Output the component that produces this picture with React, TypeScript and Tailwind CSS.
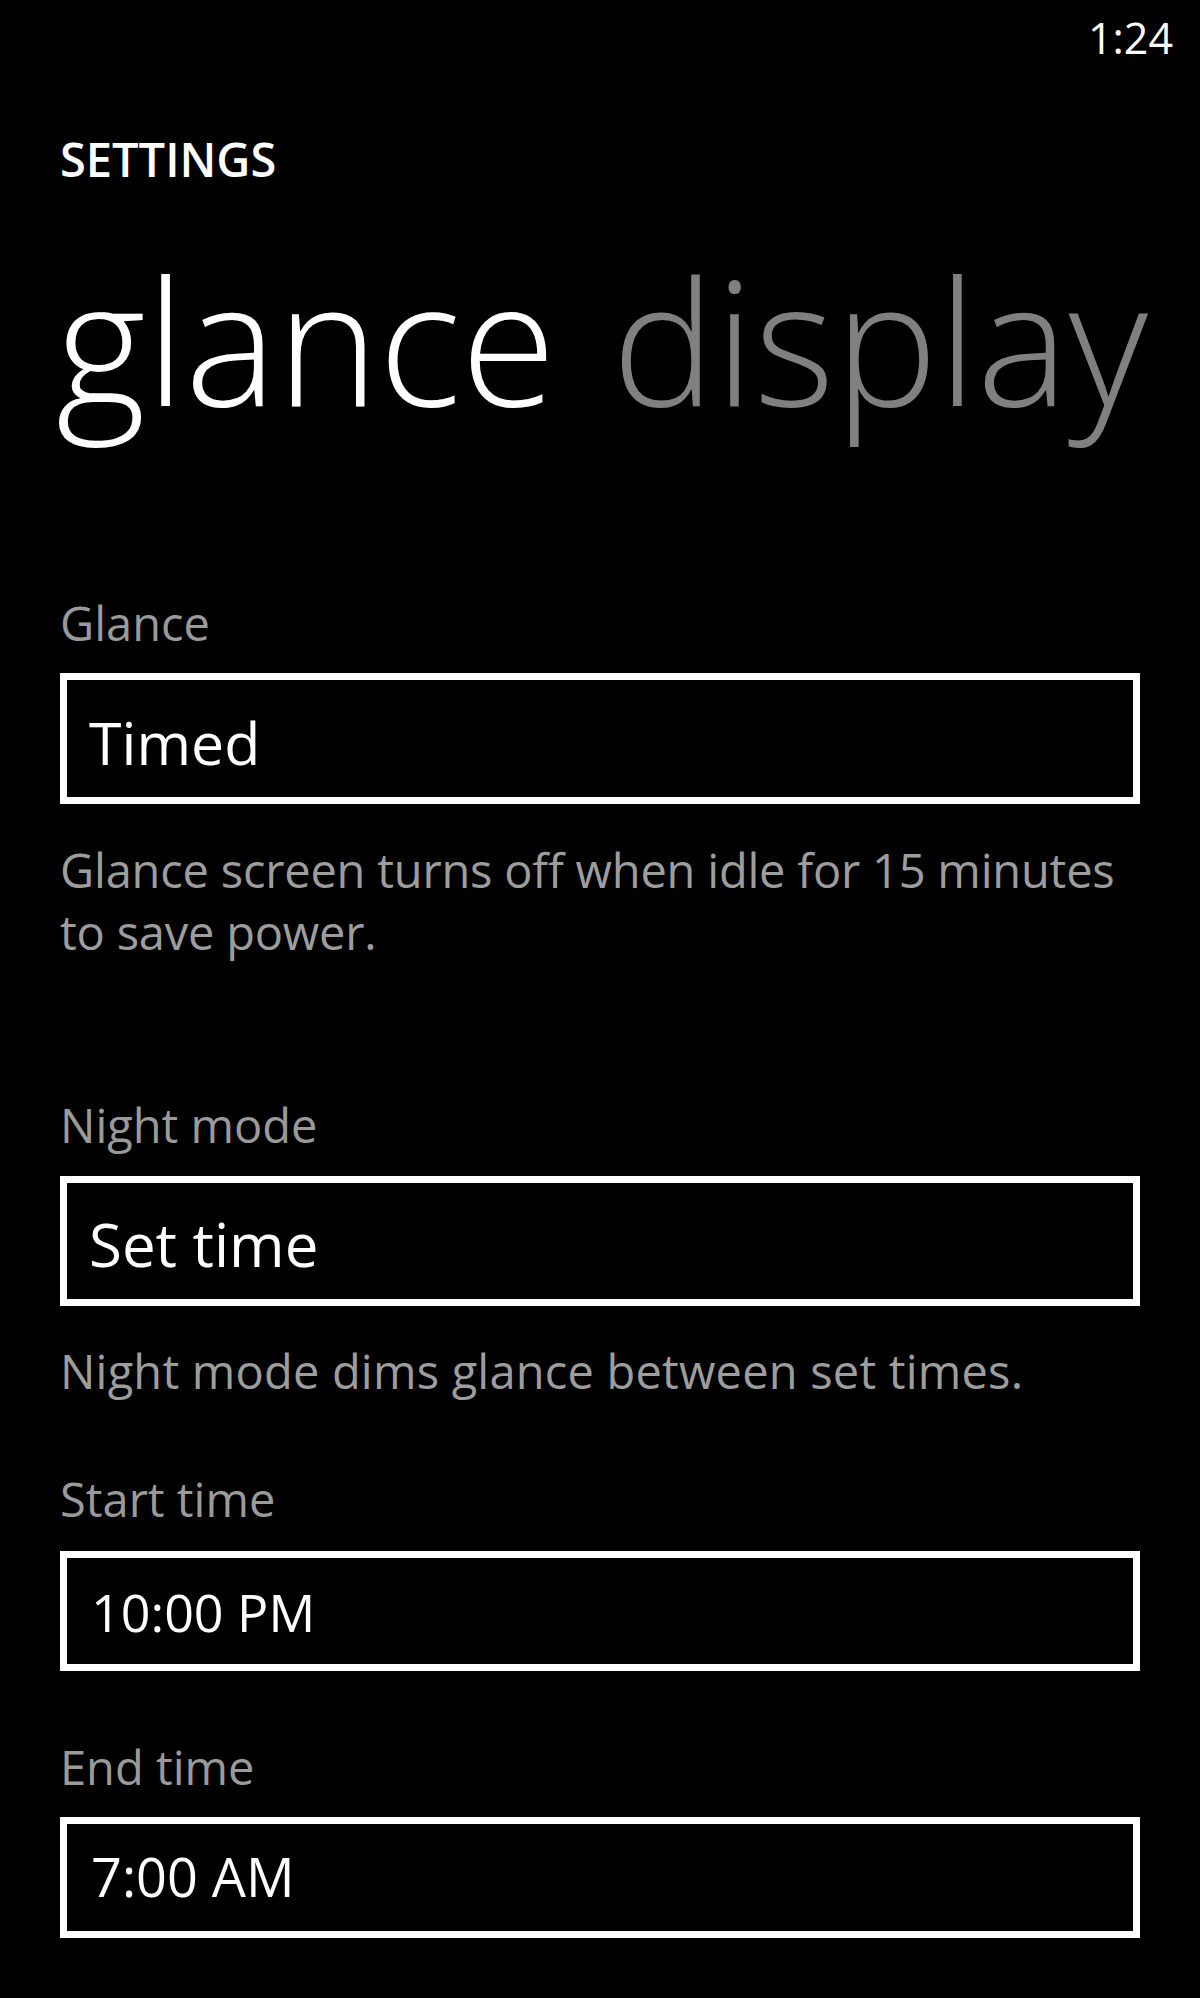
import React from "react";

const font = { fontFamily: '"Open Sans", "Noto Sans", "DejaVu Sans", sans-serif' };

function Label({ text, mt }: { text: string; mt: string }) {
  return (
    <div className={`${mt} text-[47px] leading-[56px] text-[#9a9a9a] whitespace-nowrap`}>{text}</div>
  );
}

export default function App() {
  return (
    <div className="w-[1200px] h-[1998px] bg-black text-white overflow-hidden" style={font}>
      <div className="pt-[8px] pr-[27px] text-right text-[43px] leading-[60px]">1:24</div>
      <div className="mt-[66px] pl-[60px] text-[47px] leading-[50px] font-semibold">SETTINGS</div>
      <div className="mt-[55px] pl-[56px] text-[173px] leading-[200px] font-light whitespace-nowrap">
        <span className="text-white">glance</span>
        <span className="ml-[56px] text-[#808080]">display</span>
      </div>
      <div className="px-[60px]">
        <Label text="Glance" mt="mt-[156px]" />
        <div className="mt-[22px] h-[131px] border-[7px] border-white pl-[22px] pt-[32px]">
          <div className="text-[59px] leading-[60px]">Timed</div>
        </div>
        <div className="mt-[35px] text-[47px] leading-[62px] text-[#9d9d9d] whitespace-nowrap tracking-[-0.2px]">
          Glance screen turns off when idle for 15 minutes
          <br />
          to save power.
        </div>
        <Label text="Night mode" mt="mt-[134px]" />
        <div className="mt-[23px] h-[130px] border-[7px] border-white pl-[22px] pt-[31px]">
          <div className="text-[60px] leading-[60px]">Set time</div>
        </div>
        <div className="mt-[34px] text-[47px] leading-[62px] text-[#9d9d9d] whitespace-nowrap tracking-[0.2px]">
          Night mode dims glance between set times.
        </div>
        <Label text="Start time" mt="mt-[69px]" />
        <div className="mt-[24px] h-[120px] border-[7px] border-white pl-[24px] pt-[26px]">
          <div className="text-[52px] leading-[56px]">10:00 PM</div>
        </div>
        <Label text="End time" mt="mt-[68px]" />
        <div className="mt-[22px] h-[121px] border-[7px] border-white pl-[24px] pt-[24px]">
          <div className="text-[54px] leading-[56px]">7:00 AM</div>
        </div>
      </div>
    </div>
  );
}
